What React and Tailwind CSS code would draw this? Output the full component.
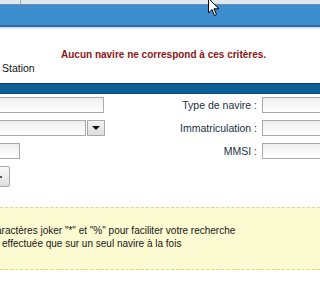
import React from "react";

// Champ texte simple, bordure grise
const Field = ({ className = "" }) => (
  <div
    className={
      "h-[16px] border border-[#a9a9a9] bg-gradient-to-b from-[#efefef] to-white " +
      className
    }
  />
);

const App = () => {
  return (
    <div
      className="relative w-[320px] h-[300px] overflow-hidden bg-white text-[#1a1a1a]"
      style={{ fontFamily: '"Liberation Sans", Arial, sans-serif' }}
    >
      {/* Bandeau du haut */}
      <div className="relative h-[4px] bg-[#dfe7ef]">
        <div className="absolute left-[20px] top-0 h-[5px] w-px bg-[#8ea3b8]" />
      </div>
      <div className="h-px bg-[#6a8db0]" />
      <div className="h-[20px] bg-[#3d8ecf]" />
      <div className="h-[2px] bg-[#2c6ba3]" />
      <div className="h-[3px] bg-gradient-to-b from-[#c3d4e5] to-white" />

      {/* Message d'erreur */}
      <p className="mt-[18px] ml-[61px] text-[10px] leading-[13px] font-bold text-[#8c1616] whitespace-nowrap">
        Aucun navire ne correspond à ces critères.
      </p>
      <p className="mt-[1px] ml-[2px] text-[10.5px] leading-[13px] text-[#111]">Station</p>

      {/* Barre de section */}
      <div className="mt-[8px] h-[11px] border-t border-[#0a3c62] border-b border-b-[#0d4c7a] bg-[#0b5f98]" />

      {/* Formulaire */}
      <div className="mt-[3px] flex">
        <div className="w-[180px] shrink-0 flex flex-col gap-[7px]">
          <Field className="-ml-[10px] w-[114px]" />
          <div className="-ml-[10px] flex h-[16px] w-[115px]">
            <Field className="flex-1" />
            <div className="ml-px w-[18px] h-[16px] border border-[#a9a9a9] bg-gradient-to-b from-[#f4f4f4] to-[#dcdcdc] flex items-center justify-center">
              <span className="block w-0 h-0 border-l-[4px] border-r-[4px] border-t-[4px] border-l-transparent border-r-transparent border-t-[#111]" />
            </div>
          </div>
          <Field className="-ml-[10px] w-[30px]" />
          <div className="-ml-[30px] w-[40px] h-[21px] border border-[#a9a9a9] rounded-[2px] bg-gradient-to-b from-[#fafafa] to-[#dedede] flex items-center justify-end pr-[7px]">
            <span className="block w-[2px] h-[2px] bg-[#555]" />
          </div>
        </div>

        <div className="w-[162px] shrink-0 flex flex-col gap-[7px] text-[10.5px] text-[#1c2f3e]">
          {["Type de navire :", "Immatriculation :", "MMSI :"].map((label) => (
            <div key={label} className="flex items-center h-[16px]">
              <span className="flex-1 text-right whitespace-nowrap leading-[16px]">{label}</span>
              <Field className="ml-[5px] w-[80px] shrink-0" />
            </div>
          ))}
        </div>
      </div>

      {/* Encadré d'aide */}
      <div className="mt-[20px] -mx-[20px] h-[63px] border border-dashed border-[#e0d68a] bg-[#fdfbd1] pt-[16px] pl-[20px] text-[10px] leading-[13px] text-[#161616]">
        <p className="-ml-[10px] whitespace-nowrap">
          caractères joker "*" et "%" pour faciliter votre recherche
        </p>
        <p className="ml-[1px] whitespace-nowrap">effectuée que sur un seul navire à la fois</p>
      </div>

      {/* Curseur de la souris */}
      <svg
        className="absolute left-[208px] top-[-2px]"
        width="12"
        height="19"
        viewBox="0 0 12 19"
      >
        <path
          d="M0.5 0.5 L0.5 15 L4 11.5 L6.5 17.5 L8.5 16.5 L6 10.8 L11 10.8 Z"
          fill="#fff"
          stroke="#000"
          strokeWidth="1"
          strokeLinejoin="miter"
        />
      </svg>
    </div>
  );
};

export default App;
